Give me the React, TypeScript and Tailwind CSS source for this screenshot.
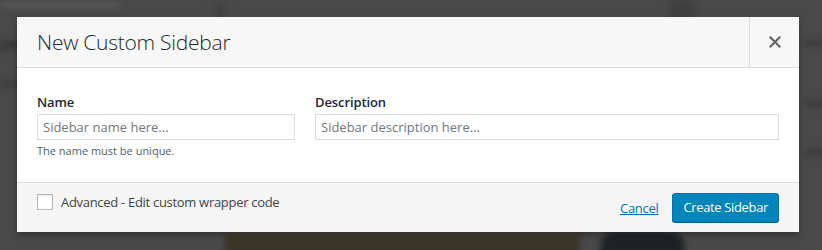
import React from "react";

export default function App() {
  return (
    <div className="relative w-[822px] h-[250px] overflow-hidden bg-[#494949] font-['Open_Sans',sans-serif]">
      {/* blurred page behind the overlay */}
      <div className="absolute inset-0 blur-[3px]">
        <div className="absolute left-0 top-[2px] w-[120px] h-[6px] bg-[#585858]" />
        <div className="absolute left-0 top-[40px] w-[20px] h-[10px] bg-[#3c3c3c]" />
        <div className="absolute left-0 top-[80px] w-[20px] h-[8px] bg-[#3e3e3e]" />
        <div className="absolute left-[215px] top-[0px] w-[10px] h-[17px] bg-[#424242]" />
        <div className="absolute left-[670px] top-[0px] w-[25px] h-[17px] bg-[#3f3f3f]" />
        <div className="absolute left-[225px] top-[234px] w-[355px] h-[30px] bg-[#3a3526]" />
        <div className="absolute left-[600px] top-[232px] w-[85px] h-[30px] rounded-full bg-[#1f2224]" />
        <div className="absolute left-[805px] top-[40px] w-[20px] h-[6px] bg-[#3a3a3a]" />
        <div className="absolute left-[805px] top-[100px] w-[20px] h-[6px] bg-[#3a3a3a]" />
        <div className="absolute left-[805px] top-[150px] w-[20px] h-[6px] bg-[#3a3a3a]" />
      </div>

      <div className="relative pt-[17px] pl-[17px]">
        <div className="w-[782px] h-[215px] flex flex-col bg-white shadow-[0_3px_6px_rgba(0,0,0,0.3)]">
          {/* header */}
          <div className="flex h-[51px] bg-[#f7f7f7] border-b border-[#dddddd]">
            <div className="flex-1 flex items-center pl-[20px]">
              <h1 className="text-[21px] font-light text-[#23282d] leading-none tracking-[-0.25px]">
                New Custom Sidebar
              </h1>
            </div>
            <button className="w-[50px] h-full flex items-center justify-center border-l border-[#dddddd]">
              <svg width="12" height="12" viewBox="0 0 12 12">
                <path d="M1.5 1.5 L10.5 10.5 M10.5 1.5 L1.5 10.5" stroke="#666" strokeWidth="2.2" strokeLinecap="square" />
              </svg>
            </button>
          </div>

          {/* body */}
          <div className="flex-1 bg-white px-[20px] pt-[25px]">
            <div className="grid grid-cols-[258px_1fr] gap-x-[20px]">
              <div className="flex flex-col">
                <label className="text-[13px] font-semibold text-[#23282d] leading-[18px] mb-[3px] tracking-[-0.1px]">Name</label>
                <input
                  placeholder="Sidebar name here..."
                  className="h-[26px] w-full border border-[#dddddd] px-[5px] text-[13px] text-[#32373c] placeholder:text-[#72777c] outline-none shadow-[inset_0_1px_2px_rgba(0,0,0,0.04)]"
                />
                <p className="mt-[3px] text-[11px] text-[#555d66] leading-[16px]">The name must be unique.</p>
              </div>
              <div className="flex flex-col">
                <label className="text-[13px] font-semibold text-[#23282d] leading-[18px] mb-[3px] tracking-[-0.1px]">Description</label>
                <input
                  placeholder="Sidebar description here..."
                  className="h-[26px] w-full border border-[#dddddd] px-[5px] text-[13px] text-[#32373c] placeholder:text-[#72777c] outline-none shadow-[inset_0_1px_2px_rgba(0,0,0,0.04)]"
                />
              </div>
            </div>
          </div>

          {/* footer */}
          <div className="h-[50px] flex items-start justify-between border-t border-[#dddddd] bg-[#f5f5f5] pl-[20px] pr-[20px] pt-[10px]">
            <label className="flex items-center gap-[8px] mt-[1px]">
              <span className="w-[16px] h-[16px] border border-[#b4b9be] bg-white shadow-[inset_0_1px_2px_rgba(0,0,0,0.1)]" />
              <span className="text-[13px] text-[#444] leading-[16px] tracking-[-0.3px]">Advanced - Edit custom wrapper code</span>
            </label>
            <div className="flex items-center gap-[14px]">
              <a className="text-[13px] text-[#0073aa] underline leading-[28px] tracking-[-0.3px]">Cancel</a>
              <button className="h-[29px] px-[10px] rounded-[3px] bg-[#0085ba] border border-[#0073aa] shadow-[0_1px_0_#006799] text-[13px] text-white leading-none tracking-[-0.35px]">
                Create Sidebar
              </button>
            </div>
          </div>
        </div>
      </div>
    </div>
  );
}
